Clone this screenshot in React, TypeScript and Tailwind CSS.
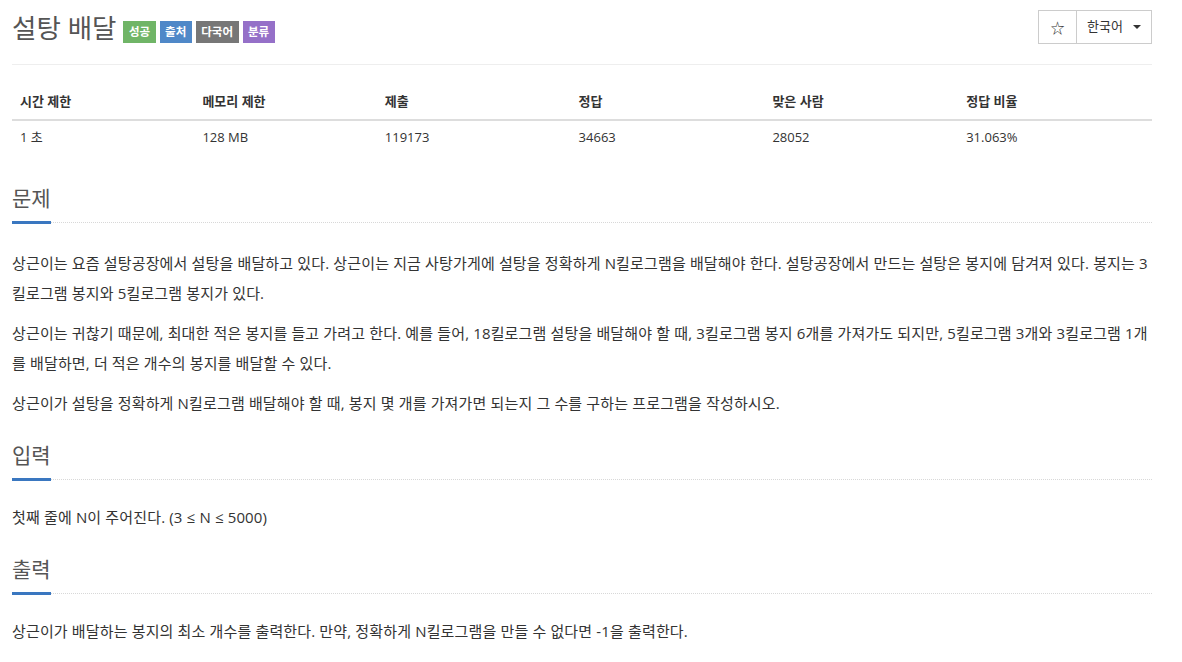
import React from 'react';

const font = { fontFamily: '"Open Sans", "Noto Sans CJK KR", sans-serif' };

const stats = [
  { label: '시간 제한', value: '1 초', width: 'w-[16%]' },
  { label: '메모리 제한', value: '128 MB', width: 'w-[16%]' },
  { label: '제출', value: '119173', width: 'w-[17%]' },
  { label: '정답', value: '34663', width: 'w-[17%]' },
  { label: '맞은 사람', value: '28052', width: 'w-[17%]' },
  { label: '정답 비율', value: '31.063%', width: 'w-[17%]' },
];

const labels = [
  { text: '성공', color: 'bg-[#70b567]' },
  { text: '출처', color: 'bg-[#4f88c8]' },
  { text: '다국어', color: 'bg-[#777777]' },
  { text: '분류', color: 'bg-[#9570c8]' },
];

function SectionHeader({ title }: { title: string }) {
  return (
    <div className="flex items-end">
      <h2 className="border-b-[3px] border-[#3a77c0] pb-[6px] text-[21px] leading-[34px] font-normal text-[#555]">
        {title}
      </h2>
      <div className="mb-[1px] flex-1 border-b border-dotted border-[#d8d8d8]" />
    </div>
  );
}

export default function App() {
  return (
    <div className="min-h-screen bg-white text-[#333]" style={font}>
      <div className="w-[1140px] ml-[12px]">
        <div className="flex items-start justify-between border-b border-[#eee] pt-[10px] pb-[18px]">
          <div className="flex items-center">
            <h1 className="text-[26.5px] leading-[36px] font-normal text-[#555]">설탕 배달</h1>
            <div className="ml-[7px] mt-[8px] flex gap-[4px]">
              {labels.map((l) => (
                <span
                  key={l.text}
                  className={`${l.color} px-[5.5px] text-[11.5px] font-bold leading-[22px] text-white`}
                >
                  {l.text}
                </span>
              ))}
            </div>
          </div>
          <div className="flex h-[34px] border border-[#ccc] text-[13px] text-[#333]">
            <div className="flex w-[38px] items-center justify-center border-r border-[#ccc] text-[14px]">☆</div>
            <div className="flex items-center px-[10px]">
              한국어
              <span className="ml-[10px] inline-block border-x-[4px] border-t-[4px] border-x-transparent border-t-[#333]" />
            </div>
          </div>
        </div>

        <table className="mt-[19px] w-full border-collapse text-[13px] leading-[18.5px]">
          <thead>
            <tr className="border-b-2 border-[#ddd]">
              {stats.map((s) => (
                <th key={s.label} className={`${s.width} p-[8px] text-left font-bold`}>
                  {s.label}
                </th>
              ))}
            </tr>
          </thead>
          <tbody>
            <tr>
              {stats.map((s) => (
                <td key={s.label} className="p-[8px] pt-[7px]">
                  {s.value}
                </td>
              ))}
            </tr>
          </tbody>
        </table>

        <div className="mt-[27px]">
          <SectionHeader title="문제" />
          <div className="mt-[24px] space-y-[10px] text-[15px] leading-[30px] tracking-[0.15px]">
            <p>
              상근이는 요즘 설탕공장에서 설탕을 배달하고 있다. 상근이는 지금 사탕가게에 설탕을 정확하게 N킬로그램을 배달해야 한다. 설탕공장에서 만드는 설탕은 봉지에 담겨져 있다. 봉지는 3킬로그램 봉지와 5킬로그램 봉지가 있다.
            </p>
            <p>
              상근이는 귀찮기 때문에, 최대한 적은 봉지를 들고 가려고 한다. 예를 들어, 18킬로그램 설탕을 배달해야 할 때, 3킬로그램 봉지 6개를 가져가도 되지만, 5킬로그램 3개와 3킬로그램 1개를 배달하면, 더 적은 개수의 봉지를 배달할 수 있다.
            </p>
            <p>상근이가 설탕을 정확하게 N킬로그램 배달해야 할 때, 봉지 몇 개를 가져가면 되는지 그 수를 구하는 프로그램을 작성하시오.</p>
          </div>
        </div>

        <div className="mt-[20px]">
          <SectionHeader title="입력" />
          <p className="mt-[21px] text-[15px] leading-[30px] tracking-[0.15px]">첫째 줄에 N이 주어진다. (3 ≤ N ≤ 5000)</p>
        </div>

        <div className="mt-[20px]">
          <SectionHeader title="출력" />
          <p className="mt-[21px] text-[15px] leading-[30px] tracking-[0.15px]">
            상근이가 배달하는 봉지의 최소 개수를 출력한다. 만약, 정확하게 N킬로그램을 만들 수 없다면 -1을 출력한다.
          </p>
        </div>
      </div>
    </div>
  );
}
